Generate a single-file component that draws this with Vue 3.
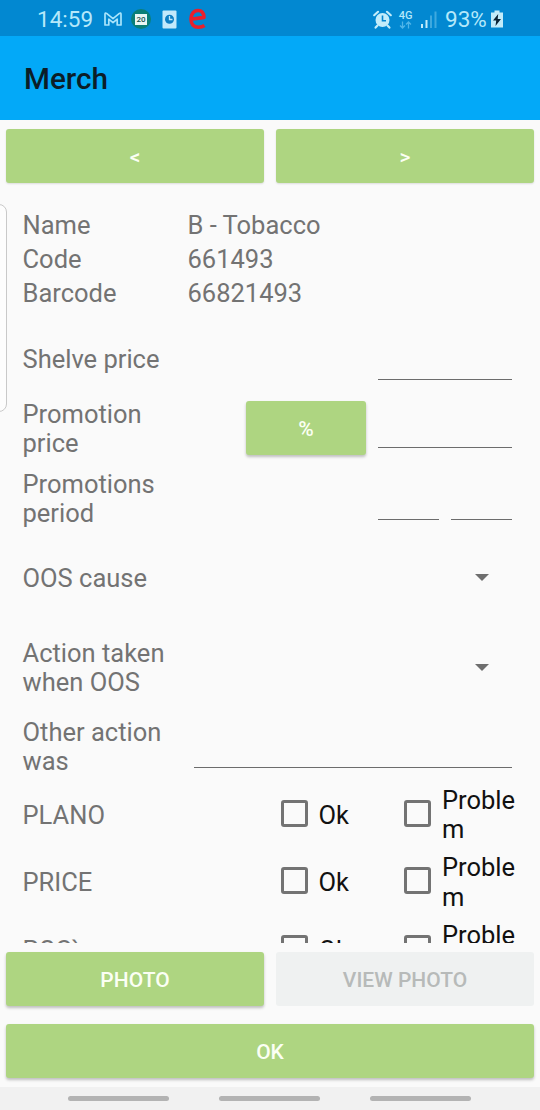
<template>
  <div class="screen">
    <div class="statusbar">
      <span class="clock">14:59</span>
      <svg class="gmail" width="20" height="16" viewBox="0 0 20 16">
        <path
          d="M2 14V3.2Q2 1.4 3.6 2.4L10 7.6L16.400 2.400Q18 1.400 18 3.200V14H14.200V8.200L10 11.600L5.800 8.200V14Z"
          fill="none"
          stroke="#a9e4fb"
          stroke-width="1.700"
          stroke-linejoin="round"
        />
      </svg>
      <div class="calendar">
        <div class="calpage">20</div>
      </div>
      <svg class="clockfile" width="15" height="19" viewBox="0 0 15 19">
        <rect x="0.500" y="0.500" width="14" height="18" rx="1" fill="#c2e9fb" />
        <circle cx="7.500" cy="9.300" r="4.500" fill="#0d7fc4" />
        <path d="M7.500 6V9.500H10.500" fill="none" stroke="#c2e9fb" stroke-width="1.300" />
      </svg>
      <svg class="elogo" width="19" height="22" viewBox="0 0 19 22">
        <path
          d="M3 11.300L16 9.400C15.800 5 13.500 2.500 10 2.500C5.800 2.500 3 6 3 11C3 16.500 6 19.300 10.400 19.300C13 19.300 15 18.600 16.500 17.500"
          fill="none"
          stroke="#e8202c"
          stroke-width="3.600"
          stroke-linejoin="round"
        />
      </svg>
      <div class="spacer"></div>
      <svg class="alarm" width="19" height="19" viewBox="0 0 19 19">
        <circle cx="9.500" cy="10" r="7" fill="#c2ecfa" />
        <path
          d="M1.200 5.200L5 1.800M17.800 5.200L14 1.800M4.500 15.500L2.600 17.600M14.500 15.500L16.400 17.600"
          fill="none"
          stroke="#c2ecfa"
          stroke-width="2.200"
          stroke-linecap="round"
        />
        <path d="M9.500 5.500V10.800H13" fill="none" stroke="#0485cf" stroke-width="1.600" />
      </svg>
      <div class="network">
        <span>4G</span>
        <svg width="13" height="8" viewBox="0 0 13 8">
          <path
            d="M3.500 0.500V7M1 4.500L3.500 7L6 4.500M9.500 7.500V1M7 3.500L9.500 1L12 3.500"
            fill="none"
            stroke="#4fb5e8"
            stroke-width="1.300"
          />
        </svg>
      </div>
      <svg class="signal" width="16" height="17" viewBox="0 0 16 17">
        <rect x="0" y="13" width="2" height="4" fill="#c2ecfa" />
        <rect x="4.500" y="9" width="2" height="8" fill="#c2ecfa" />
        <rect x="9" y="4.500" width="2" height="12.500" fill="#3fa9df" />
        <rect x="13.500" y="0.500" width="2" height="16.500" fill="#3fa9df" />
      </svg>
      <span class="percent">93%</span>
      <svg class="battery" width="12" height="18" viewBox="0 0 12 18">
        <path d="M3.500 0.500H8.500V2.500H12V17.500H0V2.500H3.500Z" fill="#c2ecfa" />
        <path d="M7.200 4L2 10.600H5.200L4.500 16L10 9H6.700Z" fill="#0a2436" />
      </svg>
    </div>

    <div class="appbar">Merch</div>

    <div class="buttonrow navrow">
      <button class="btn">&lt;</button>
      <button class="btn">&gt;</button>
    </div>

    <div class="edgepanel"></div>

    <div class="form">
      <div class="info" v-for="item in info" :key="item.label">
        <div class="label">{{ item.label }}</div>
        <div>{{ item.value }}</div>
      </div>

      <div class="row shelve">
        <div class="label">Shelve price</div>
        <input class="price" v-model="shelvePrice" />
      </div>
      <div class="row promo">
        <div class="label twoline">Promotion price</div>
        <button class="btn percentbtn">%</button>
        <input class="price" v-model="promotionPrice" />
      </div>
      <div class="row period">
        <div class="label twoline">Promotions period</div>
        <input class="date" v-model="periodFrom" />
        <input class="date" v-model="periodTo" />
      </div>
      <div class="row cause">
        <div class="label">OOS cause</div>
        <div class="caret"></div>
      </div>
      <div class="row action">
        <div class="label twoline">Action taken when OOS</div>
        <div class="caret"></div>
      </div>
      <div class="row other">
        <div class="label twoline">Other action was</div>
        <input class="wide" v-model="otherAction" />
      </div>

      <div class="checkrow" v-for="check in checks" :key="check.name">
        <div class="checkname">{{ check.name }}</div>
        <label class="ok">
          <input type="checkbox" v-model="check.ok" />
          <span>Ok</span>
        </label>
        <label class="problem">
          <input type="checkbox" v-model="check.problem" />
          <span>Problem</span>
        </label>
      </div>
    </div>

    <div class="buttonrow photorow">
      <button class="btn">PHOTO</button>
      <button class="btn" disabled>VIEW PHOTO</button>
    </div>
    <div class="buttonrow okrow">
      <button class="btn">OK</button>
    </div>

    <div class="navbar">
      <div></div>
      <div></div>
      <div></div>
    </div>
  </div>
</template>

<script setup>
import { ref } from "vue";

const info = [
  { label: "Name", value: "B - Tobacco" },
  { label: "Code", value: "661493" },
  { label: "Barcode", value: "66821493" },
];

const checks = ref([
  { name: "PLANO", ok: false, problem: false },
  { name: "PRICE", ok: false, problem: false },
  { name: "POS`", ok: false, problem: false },
]);

const shelvePrice = ref("");
const promotionPrice = ref("");
const periodFrom = ref("");
const periodTo = ref("");
const otherAction = ref("");
</script>

<style>
body {
  margin: 0;
  background-color: #fafafa;
}
</style>

<style scoped>
.screen {
  position: relative;
  display: flex;
  flex-direction: column;
  width: 540px;
  height: 1110px;
  overflow: hidden;
  box-sizing: border-box;
  background-color: #fafafa;
  font-family: Roboto, sans-serif;
  font-size: 25.5px;
  line-height: 29.4px;
  color: #737373;
}
.statusbar {
  display: flex;
  align-items: center;
  height: 36px;
  padding: 2px 37px 0 37px;
  box-sizing: border-box;
  background-color: #0288d1;
  color: #b5e8fa;
  font-size: 22.5px;
}
.clock {
  width: 56px;
  padding-top: 2px;
}
.gmail {
  margin-left: 10px;
}
.calendar {
  display: flex;
  align-items: center;
  justify-content: center;
  width: 20px;
  height: 20px;
  margin-left: 8px;
  border-radius: 10px;
  background-color: #0b7f77;
}
.calpage {
  width: 12px;
  height: 11px;
  background-color: #e9f7f5;
  color: #14514e;
  font-size: 8px;
  font-weight: 500;
  line-height: 12px;
  text-align: center;
}
.clockfile {
  margin-left: 11px;
}
.elogo {
  margin-left: 11px;
  margin-bottom: 1px;
}
.spacer {
  flex: 1;
}
.alarm {
  margin-right: 6px;
}
.network {
  display: flex;
  flex-direction: column;
  align-items: center;
  width: 15px;
  margin-right: 8px;
  font-size: 11px;
  font-weight: 500;
  line-height: 11px;
}
.signal {
  margin-right: 8px;
}
.percent {
  width: 41px;
  margin-right: 5px;
  padding-top: 2px;
}
.appbar {
  height: 84px;
  padding-left: 24px;
  box-sizing: border-box;
  background-color: #03a9f8;
  color: #0b1d28;
  font-size: 29.7px;
  font-weight: 500;
  line-height: 86px;
}
.buttonrow {
  display: flex;
  gap: 12px;
  padding: 0 6px;
}
.navrow {
  padding-top: 9px;
}
.photorow {
  padding-top: 9px;
}
.okrow {
  padding-top: 18px;
}
.btn {
  flex: 1;
  height: 54px;
  padding: 2px 0 0;
  border: none;
  border-radius: 3px;
  background-color: #aed581;
  box-shadow: 0 2px 3px rgba(0, 0, 0, 0.24);
  color: #fbfff4;
  font-family: inherit;
  font-size: 21px;
  font-weight: 500;
}
.navrow .btn {
  box-shadow: 0 1px 2px rgba(0, 0, 0, 0.12);
}
.btn:disabled {
  background-color: #eff1f1;
  box-shadow: none;
  color: #b7bab9;
}
/* handle of the edge panel, lies over the form */
.edgepanel {
  position: absolute;
  left: -13px;
  top: 204px;
  width: 18px;
  height: 206px;
  border: 1px solid #c9c9c9;
  border-radius: 8px;
  background-color: #fdfdfd;
}
.form {
  height: 760px;
  padding: 28px 28px 0 22.5px;
  box-sizing: border-box;
  overflow: hidden;
}
.info {
  display: flex;
  height: 34px;
}
.label {
  width: 165px;
  padding-right: 12px;
  box-sizing: border-box;
  flex: none;
}
.twoline {
  padding-top: 1.5px;
}
.row {
  display: flex;
  align-items: center;
  justify-content: flex-end;
}
.row .label {
  margin-right: auto;
}
.shelve {
  height: 68px;
  margin-top: 13px;
}
.promo {
  height: 69px;
}
.period {
  height: 71px;
}
.cause {
  height: 89px;
}
.action {
  height: 89px;
}
.other {
  height: 69px;
}
.row input {
  height: 39px;
  padding: 0;
  border: none;
  border-bottom: 1.5px solid #6c6c6c;
  border-radius: 0;
  box-sizing: border-box;
  background: transparent;
  outline: none;
  color: #212121;
  font-family: inherit;
  font-size: 25px;
}
.row .price {
  width: 133.5px;
  margin-right: 0.5px;
}
.row .date {
  width: 60.5px;
  height: 42px;
  margin-left: 12px;
  margin-right: 0.5px;
}
.row .wide {
  width: 318px;
  height: 43px;
  margin-right: 0.5px;
}
.percentbtn {
  flex: none;
  width: 120px;
  margin-right: 12px;
  margin-bottom: 2px;
}
.caret {
  margin-right: 23.5px;
  margin-bottom: 2px;
  border-left: 7.5px solid transparent;
  border-right: 7.5px solid transparent;
  border-top: 7.5px solid #6e6e6e;
}
.action .caret {
  margin-bottom: 0;
}
.checkrow {
  display: flex;
  align-items: center;
  height: 67.5px;
  color: #111;
}
.checkname {
  flex: none;
  width: 258px;
  padding-top: 1px;
  color: #737373;
}
.ok,
.problem {
  display: flex;
  flex: none;
  align-items: center;
}
.ok {
  width: 123.5px;
}
.checkrow input {
  appearance: none;
  flex: none;
  width: 27px;
  height: 27px;
  margin: 0 11px 3px 0;
  border: 3px solid #737373;
  border-radius: 3px;
}
.checkrow span {
  padding-top: 1px;
}
.problem span {
  width: 76px;
  word-break: break-all;
}
.navbar {
  display: flex;
  justify-content: center;
  align-items: center;
  gap: 50px;
  height: 23px;
  margin-top: auto;
  padding-right: 1px;
  background-color: #f1f1f1;
}
.navbar div {
  width: 101px;
  height: 5px;
  border-radius: 3px;
  background-color: #b3b3b3;
}
</style>
